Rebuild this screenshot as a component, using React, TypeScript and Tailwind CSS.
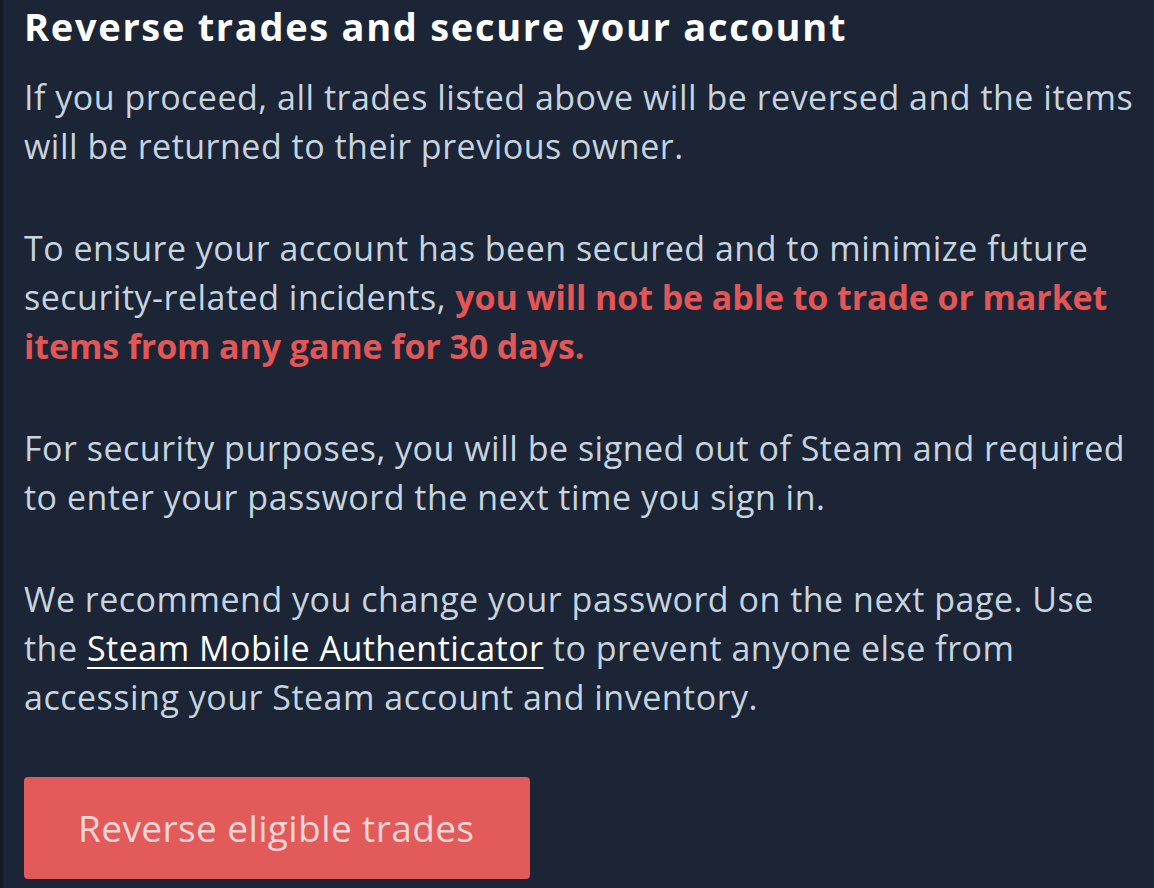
import React from 'react';

export default function App() {
  return (
    <div
      className="w-[1154px] h-[888px] overflow-hidden bg-[#1b2536] border-l-[3px] border-[#131a26] text-[#c7d3de]"
      style={{ fontFamily: '"Open Sans", "Noto Sans", sans-serif' }}
    >
      <div className="pl-[21px] pt-[1px] whitespace-nowrap">
        <h1 className="text-[38px] leading-[50px] font-bold text-white tracking-[1.7px]">
          Reverse trades and secure your account
        </h1>

        <p className="mt-[22px] text-[34px] leading-[49px] tracking-[0.5px]">
          If you proceed, all trades listed above will be reversed and the items
          <br />
          will be returned to their previous owner.
        </p>

        <p className="mt-[53px] text-[34px] leading-[49px] tracking-[0.5px]">
          To ensure your account has been secured and to minimize future
          <br />
          security-related incidents,{' '}
          <span className="font-bold text-[#e25656] tracking-[-0.1px]">
            you will not be able to trade or market
            <br />
            items from any game for 30 days.
          </span>
        </p>

        <p className="mt-[53px] text-[34px] leading-[49px] tracking-[0.5px]">
          For security purposes, you will be signed out of Steam and required
          <br />
          to enter your password the next time you sign in.
        </p>

        <p className="mt-[53px] text-[34px] leading-[49px] tracking-[0.5px]">
          We recommend you change your password on the next page. Use
          <br />
          the{' '}
          <a className="text-white underline underline-offset-[6px] decoration-2">Steam Mobile Authenticator</a>{' '}
          to prevent anyone else from
          <br />
          accessing your Steam account and inventory.
        </p>

        <button className="mt-[55px] w-[506px] h-[102px] rounded-[4px] bg-[#e25a5a] text-[37px] tracking-[0.4px] text-[#fbd6d4] flex items-center pl-[54px]">
          Reverse eligible trades
        </button>
      </div>
    </div>
  );
}
